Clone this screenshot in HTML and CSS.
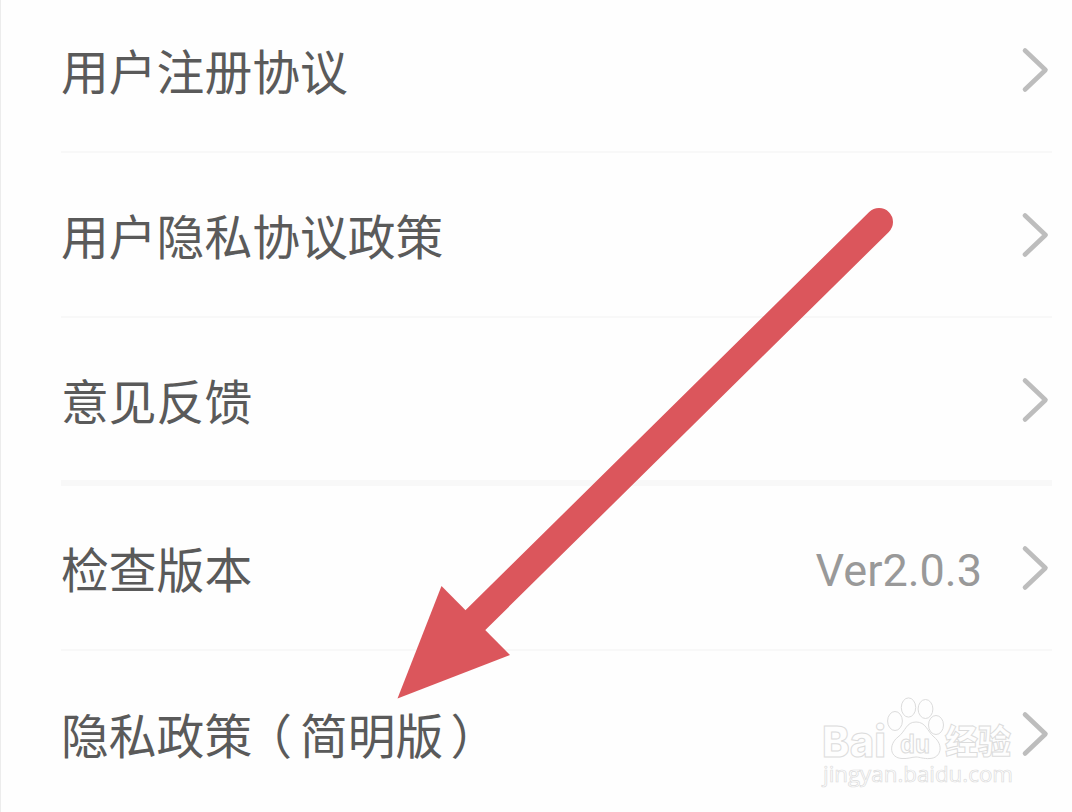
FILE: index.html
```html
<!DOCTYPE html>
<html lang="zh-CN">
<head>
	<meta charset="utf-8">
	<title>设置</title>
	<link rel="stylesheet" href="styles.css">
</head>
<body>
	<svg class="symbols">
		<symbol id="chevron" viewBox="0 0 32 48">
			<path d="M5 4.500 L25.500 24 L5 43.500" fill="none" stroke="currentColor" stroke-width="4.6" stroke-linecap="round" stroke-linejoin="round"/>
		</symbol>
	</svg>
	<div class="page">
		<ul class="list">
			<li class="row">
				<span class="label">用户注册协议</span>
				<svg class="chevron"><use href="#chevron"/></svg>
			</li>
			<li class="row">
				<span class="label">用户隐私协议政策</span>
				<svg class="chevron"><use href="#chevron"/></svg>
			</li>
			<li class="row group-end">
				<span class="label">意见反馈</span>
				<svg class="chevron"><use href="#chevron"/></svg>
			</li>
			<li class="row">
				<span class="label">检查版本</span>
				<span class="value">Ver2.0.3</span>
				<svg class="chevron"><use href="#chevron"/></svg>
			</li>
			<li class="row last">
				<span class="label">隐私政策<span class="paren open">（</span>简明版<span class="paren close">）</span></span>
				<svg class="chevron"><use href="#chevron"/></svg>
			</li>
		</ul>

		<svg class="watermark" viewBox="0 0 200 100">
			<text class="mark-logo" x="2" y="67" textLength="64" lengthAdjust="spacingAndGlyphs">Bai</text>
			<path class="paw" d="M96 32 C106 32 107 41 114 47 C124 55 121 68 110 68.500 C103 69 100 67 96 67 C92 67 88 69 82 68.500 C70 68 68 55 78 47 C86 41 86 32 96 32 Z"/>
			<ellipse class="paw" cx="75" cy="31" rx="7.4" ry="9.5"/>
			<ellipse class="paw" cx="88.500" cy="17.500" rx="7.2" ry="9.6"/>
			<ellipse class="paw" cx="105.500" cy="19" rx="7.4" ry="9.5"/>
			<ellipse class="paw" cx="116" cy="35" rx="7.5" ry="9.5"/>
			<text class="mark-du" x="80" y="63" textLength="30" lengthAdjust="spacingAndGlyphs">du</text>
			<text class="mark-cn" x="125" y="64" textLength="66" lengthAdjust="spacingAndGlyphs">经验</text>
			<text class="mark-url" x="3" y="92" textLength="190" lengthAdjust="spacingAndGlyphs">jingyan.baidu.com</text>
		</svg>

		<svg class="arrow" viewBox="0 0 500 500">
			<path d="M489 22 L85 420.500" stroke-width="28" stroke-linecap="round"/>
			<path d="M7.500 498.500 L51.500 386 L120 455 Z"/>
		</svg>
	</div>
</body>
</html>
```
FILE: styles.css
```css
* {
	margin:0px;
	padding: 0px;
	box-sizing: border-box;
}
body {
	font-family:"Noto Sans CJK SC",sans-serif;
	background: #fefefe;
}
.symbols {
	display: none;
}
.page {
	position: relative;
	height: 812px;
	overflow: hidden;
	border-left: 1px solid #ececec;
}
.list {
	list-style: none;
	margin-top: -12px;
	padding: 0 20px 0 60px;
}
.row {
	display: flex;
	align-items: center;
	height: 165px;
	border-bottom: 2px solid #f8f8f8;
}
.row.group-end {
	height: 168px;
	padding-top: 1px;
	border-bottom: 6px solid #f8f8f8;
}
.row.last {
	border-bottom: none;
}
.label {
	flex: 1;
	font-size: 47.8px;
	line-height: 70px;
	color: #5a5a5a;
}
.paren.open {
	margin-left: -8px;
	margin-right: 8px;
}
.paren.close {
	margin-left: 7px;
}
.value {
	margin-right: 38px;
	padding-top: 5px;
	font-family: Roboto,sans-serif;
	font-size: 45px;
	color: #999;
}
.chevron {
	width: 32px;
	height: 48px;
	color: #bdbdbd;
}
.watermark {
	position: absolute;
	left: 819px;
	top: 690px;
	width: 200px;
	height: 100px;
}
.watermark text,
.paw {
	fill: #fefefe;
	stroke: #dcdcdc;
	stroke-width: 1;
}
.watermark .mark-logo {
	font: 800 43px Inter,sans-serif;
}
.watermark .mark-du {
	font: bold 25px "Liberation Sans",sans-serif;
}
.watermark .mark-cn {
	font: 900 34px "Noto Sans CJK SC",sans-serif;
}
.watermark .mark-url {
	font: 22.5px "Open Sans",sans-serif;
	stroke-width: 0.7;
}
.arrow {
	position: absolute;
	left: 389px;
	top: 200px;
	width: 500px;
	height: 500px;
	overflow: visible;
	fill: #db565c;
	stroke: none;
}
.arrow path:first-child {
	stroke: #db565c;
}
```
